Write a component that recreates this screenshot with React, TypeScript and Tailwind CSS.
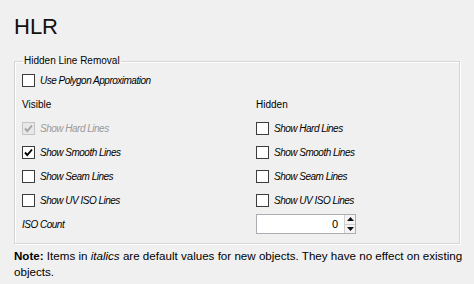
import React from 'react';

type Box = { label: string; checked?: boolean; disabled?: boolean };

const FONT = { fontFamily: '"Liberation Sans", Arial, sans-serif' };

function CheckBox({ checked, disabled }: { checked?: boolean; disabled?: boolean }) {
  return (
    <span
      className={`flex h-[13px] w-[13px] flex-shrink-0 items-center justify-center border ${
        disabled ? 'border-[#c4c4c4] bg-[#e8e8e8]' : 'border-[#3c3c3c] bg-white'
      }`}
    >
      {checked && (
        <svg viewBox="0 0 11 11" className="h-[11px] w-[11px]">
          <path
            d="M2 5.5 L4.3 8 L9 2.5"
            fill="none"
            stroke={disabled ? '#a3a3a3' : '#000000'}
            strokeWidth={1.9}
          />
        </svg>
      )}
    </span>
  );
}

function Option({ label, checked, disabled }: Box) {
  return (
    <div className="flex h-[24px] items-center gap-[5px]">
      <CheckBox checked={checked} disabled={disabled} />
      <span className={`text-[10px] italic tracking-[-0.5px] ${disabled ? 'text-[#9a9a9a]' : 'text-black'}`}>
        {label}
      </span>
    </div>
  );
}

function SpinBox() {
  return (
    <div className="flex h-[20px] w-[100px] items-stretch border border-[#abadb3] bg-white">
      <div className="flex flex-1 items-center justify-end pr-[6px] text-[11px]">0</div>
      <div className="flex w-[11px] flex-col border-l border-[#d0d0d0]">
        <div className="flex flex-1 items-center justify-center border-b border-[#d0d0d0] bg-[#f4f4f4]">
          <svg viewBox="0 0 7 4" className="h-[4px] w-[7px]">
            <path d="M0 4 L3.5 0 L7 4 Z" fill="#111" />
          </svg>
        </div>
        <div className="flex flex-1 items-center justify-center bg-[#f4f4f4]">
          <svg viewBox="0 0 7 4" className="h-[4px] w-[7px]">
            <path d="M0 0 L3.5 4 L7 0 Z" fill="#111" />
          </svg>
        </div>
      </div>
    </div>
  );
}

export default function App() {
  const visible: Box[] = [
    { label: 'Show Hard Lines', checked: true, disabled: true },
    { label: 'Show Smooth Lines', checked: true },
    { label: 'Show Seam Lines' },
    { label: 'Show UV ISO Lines' },
  ];
  const hidden: Box[] = [
    { label: 'Show Hard Lines' },
    { label: 'Show Smooth Lines' },
    { label: 'Show Seam Lines' },
    { label: 'Show UV ISO Lines' },
  ];

  return (
    <div className="h-[284px] w-[474px] overflow-hidden bg-[#f0f0f0] text-black" style={FONT}>
      <div className="pl-[14px] pt-[12px]">
        {/* Title */}
        <h1 className="h-[30px] text-[22px] leading-[30px] text-[#111]">HLR</h1>

        {/* Group box */}
        <fieldset className="mt-[13px] w-[446px] border border-[#d6d6d6] px-[7px] pb-[7px] shadow-[inset_1px_1px_0_#ffffff,1px_1px_0_#ffffff]">
          <legend className="ml-[1px] px-[1px] text-[10px] leading-[12px]">Hidden Line Removal</legend>

          <div className="pt-[1px]">
            <Option label="Use Polygon Approximation" />
          </div>

          <div className="grid grid-cols-[234px_1fr]">
            <div className="flex h-[24px] items-center text-[10px]">Visible</div>
            <div className="flex h-[24px] items-center text-[10px]">Hidden</div>

            {visible.map((v, i) => (
              <React.Fragment key={i}>
                <Option {...v} />
                <Option {...hidden[i]} />
              </React.Fragment>
            ))}

            <div className="flex h-[24px] items-center text-[10px] italic tracking-[-0.5px]">ISO Count</div>
            <div className="flex h-[24px] items-center">
              <SpinBox />
            </div>
          </div>
        </fieldset>

        {/* Note */}
        <p className="mt-[4px] w-[452px] text-[11.6px] leading-[16px]">
          <b>Note:</b> Items in <i>italics</i> are default values for new objects. They have no effect on existing
          objects.
        </p>
      </div>
    </div>
  );
}
